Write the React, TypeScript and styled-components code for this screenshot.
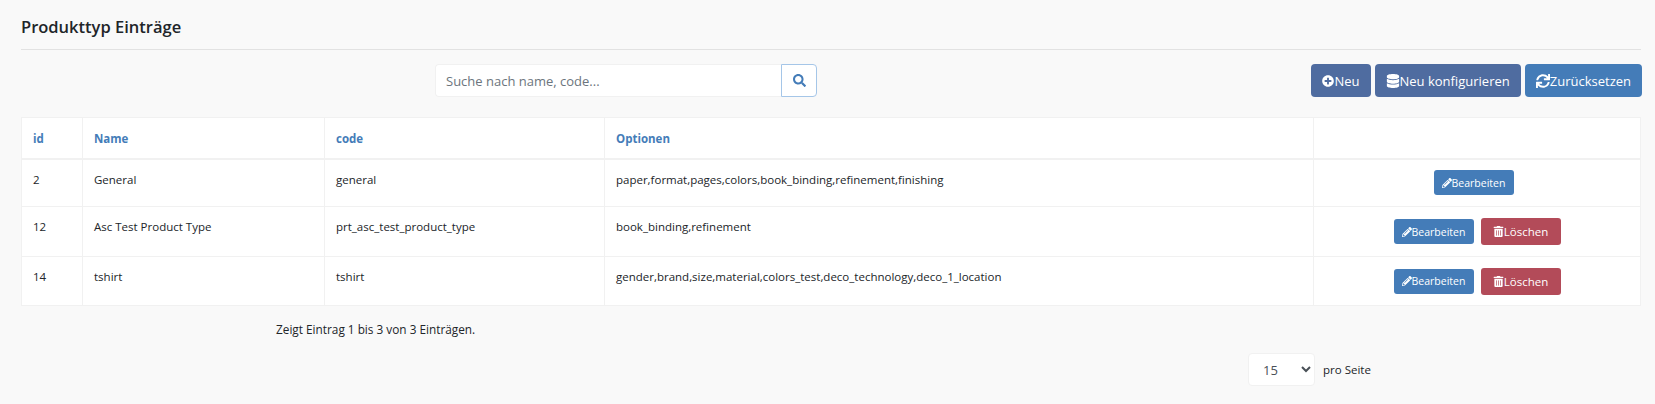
import styled, { createGlobalStyle } from "styled-components"
import {
  FaDatabase,
  FaPencilAlt,
  FaPlusCircle,
  FaSearch,
  FaSync,
  FaTrashAlt,
} from "react-icons/fa"

const rows = [
  { id: 2, name: "General", code: "general", options: "paper,format,pages,colors,book_binding,refinement,finishing", height: 48, removable: false },
  { id: 12, name: "Asc Test Product Type", code: "prt_asc_test_product_type", options: "book_binding,refinement", height: 50, removable: true },
  { id: 14, name: "tshirt", code: "tshirt", options: "gender,brand,size,material,colors_test,deco_technology,deco_1_location", height: 49, removable: true },
]

function App() {
  return (
    <Page>
      <GlobalStyle />
      <Title>Produkttyp Einträge</Title>
      <Toolbar>
        <SearchGroup>
          <SearchInput placeholder="Suche nach name, code..." />
          <SearchButton>
            <FaSearch size={13} />
          </SearchButton>
        </SearchGroup>
        <Actions>
          <TopButton $color="#4f6ca0">
            <FaPlusCircle size={12} />
            Neu
          </TopButton>
          <TopButton $color="#4f6ca0">
            <FaDatabase size={14} />
            Neu konfigurieren
          </TopButton>
          <TopButton $color="#447cb8">
            <FaSync size={14} />
            Zurücksetzen
          </TopButton>
        </Actions>
      </Toolbar>
      <Table>
        <colgroup>
          <col width="61" />
          <col width="242" />
          <col width="280" />
          <col width="709" />
          <col />
        </colgroup>
        <thead>
          <tr>
            <HeadCell>id</HeadCell>
            <HeadCell>Name</HeadCell>
            <HeadCell>code</HeadCell>
            <HeadCell>Optionen</HeadCell>
            <HeadCell />
          </tr>
        </thead>
        <tbody>
          {rows.map((row) => (
            <Row key={row.id} $height={row.height}>
              <Cell>{row.id}</Cell>
              <Cell>{row.name}</Cell>
              <Cell>{row.code}</Cell>
              <Cell>{row.options}</Cell>
              <ActionCell>
                <EditButton>
                  <FaPencilAlt size={10} />
                  Bearbeiten
                </EditButton>
                {row.removable && (
                  <DeleteButton>
                    <FaTrashAlt size={11} />
                    Löschen
                  </DeleteButton>
                )}
              </ActionCell>
            </Row>
          ))}
        </tbody>
      </Table>
      <Summary>Zeigt Eintrag 1 bis 3 von 3 Einträgen.</Summary>
      <Pager>
        <PageSize defaultValue="15">
          <option>15</option>
          <option>30</option>
        </PageSize>
        <PagerLabel>pro Seite</PagerLabel>
      </Pager>
    </Page>
  )
}

export default App

const GlobalStyle = createGlobalStyle`
  html, body {
    margin: 0;
    background: #f9f9f9;
  }

  * {
    box-sizing: border-box;
  }
`

const Page = styled.div`
  width: 1655px;
  height: 404px;
  padding: 0 14px 0 21px;
  overflow: hidden;
  font-family: "Open Sans", "Noto Sans", sans-serif;
  font-size: 11.5px;
  color: #212529;
  background: #f9f9f9;
`

const Title = styled.h1`
  margin: 0;
  height: 50px;
  padding-top: 15px;
  border-bottom: 1px solid #e2e2e2;
  font-size: 16.5px;
  line-height: 24px;
  font-weight: 600;
  color: #212529;
`

const Toolbar = styled.div`
  display: flex;
  align-items: flex-start;
  justify-content: space-between;
  height: 67px;
  padding: 14px 0 0 414px;
`

const SearchGroup = styled.div`
  display: flex;
  width: 382px;
  height: 33px;
`

const SearchInput = styled.input`
  flex: 1;
  min-width: 0;
  padding: 0 10px;
  border: 1px solid #f1f1f1;
  border-right: 0;
  border-radius: 4px 0 0 4px;
  background: #fff;
  font: inherit;
  font-size: 13px;
  outline: none;

  &::placeholder {
    color: #6c757d;
    opacity: 1;
  }
`

const SearchButton = styled.button`
  display: flex;
  align-items: center;
  justify-content: center;
  width: 36px;
  padding: 0;
  border: 1px solid #a5c6e8;
  border-radius: 0 4px 4px 0;
  background: #fff;
  color: #447cb8;
`

const Actions = styled.div`
  display: flex;
  gap: 4px;
  margin-right: -1px;
`

const TopButton = styled.button<{ $color: string }>`
  display: inline-flex;
  align-items: center;
  height: 33px;
  padding: 0 11px;
  border: 0;
  border-radius: 4px;
  background: ${(p) => p.$color};
  color: #fff;
  font: inherit;
  font-size: 13px;
  white-space: nowrap;
`

const Table = styled.table`
  width: 1620px;
  table-layout: fixed;
  border-collapse: collapse;
  background: #fff;
`

const HeadCell = styled.th`
  height: 41px;
  padding: 1px 11px 0;
  border: 1px solid #f1f1f1;
  border-bottom-width: 2px;
  text-align: left;
  font-size: 11.5px;
  font-weight: 700;
  color: #447cb8;
`

const Row = styled.tr<{ $height: number }>`
  height: ${(p) => p.$height}px;
`

const Cell = styled.td`
  padding: 12px 11px 0;
  border: 1px solid #f1f1f1;
  vertical-align: top;
  line-height: 16px;
`

const ActionCell = styled.td`
  padding: 0;
  border: 1px solid #f1f1f1;
  text-align: center;
`

const EditButton = styled.button`
  display: inline-flex;
  align-items: center;
  justify-content: center;
  vertical-align: middle;
  width: 80px;
  height: 25px;
  margin-right: 7px;
  padding: 0;
  border: 0;
  border-radius: 3px;
  background: #447cb8;
  color: #fff;
  font: inherit;
  font-size: 10.5px;
`

const DeleteButton = styled.button`
  display: inline-flex;
  align-items: center;
  justify-content: center;
  vertical-align: middle;
  width: 80px;
  height: 27px;
  padding: 0;
  border: 0;
  border-radius: 3px;
  background: #b34b59;
  color: #fff;
  font: inherit;
  font-size: 11.5px;
`

const Summary = styled.p`
  margin: 0;
  padding: 15px 0 0 255px;
  font-size: 11.8px;
  line-height: 16px;
`

const Pager = styled.div`
  display: flex;
  align-items: center;
  gap: 8px;
  margin-top: 16px;
  padding-left: 1227px;
`

const PageSize = styled.select`
  width: 67px;
  height: 33px;
  padding: 0 0 0 10px;
  border: 1px solid #f1f1f1;
  border-radius: 4px;
  background: #fff;
  color: #495057;
  font: inherit;
  font-size: 13px;
  outline: none;
`

const PagerLabel = styled.span`
  font-size: 11.5px;
`
